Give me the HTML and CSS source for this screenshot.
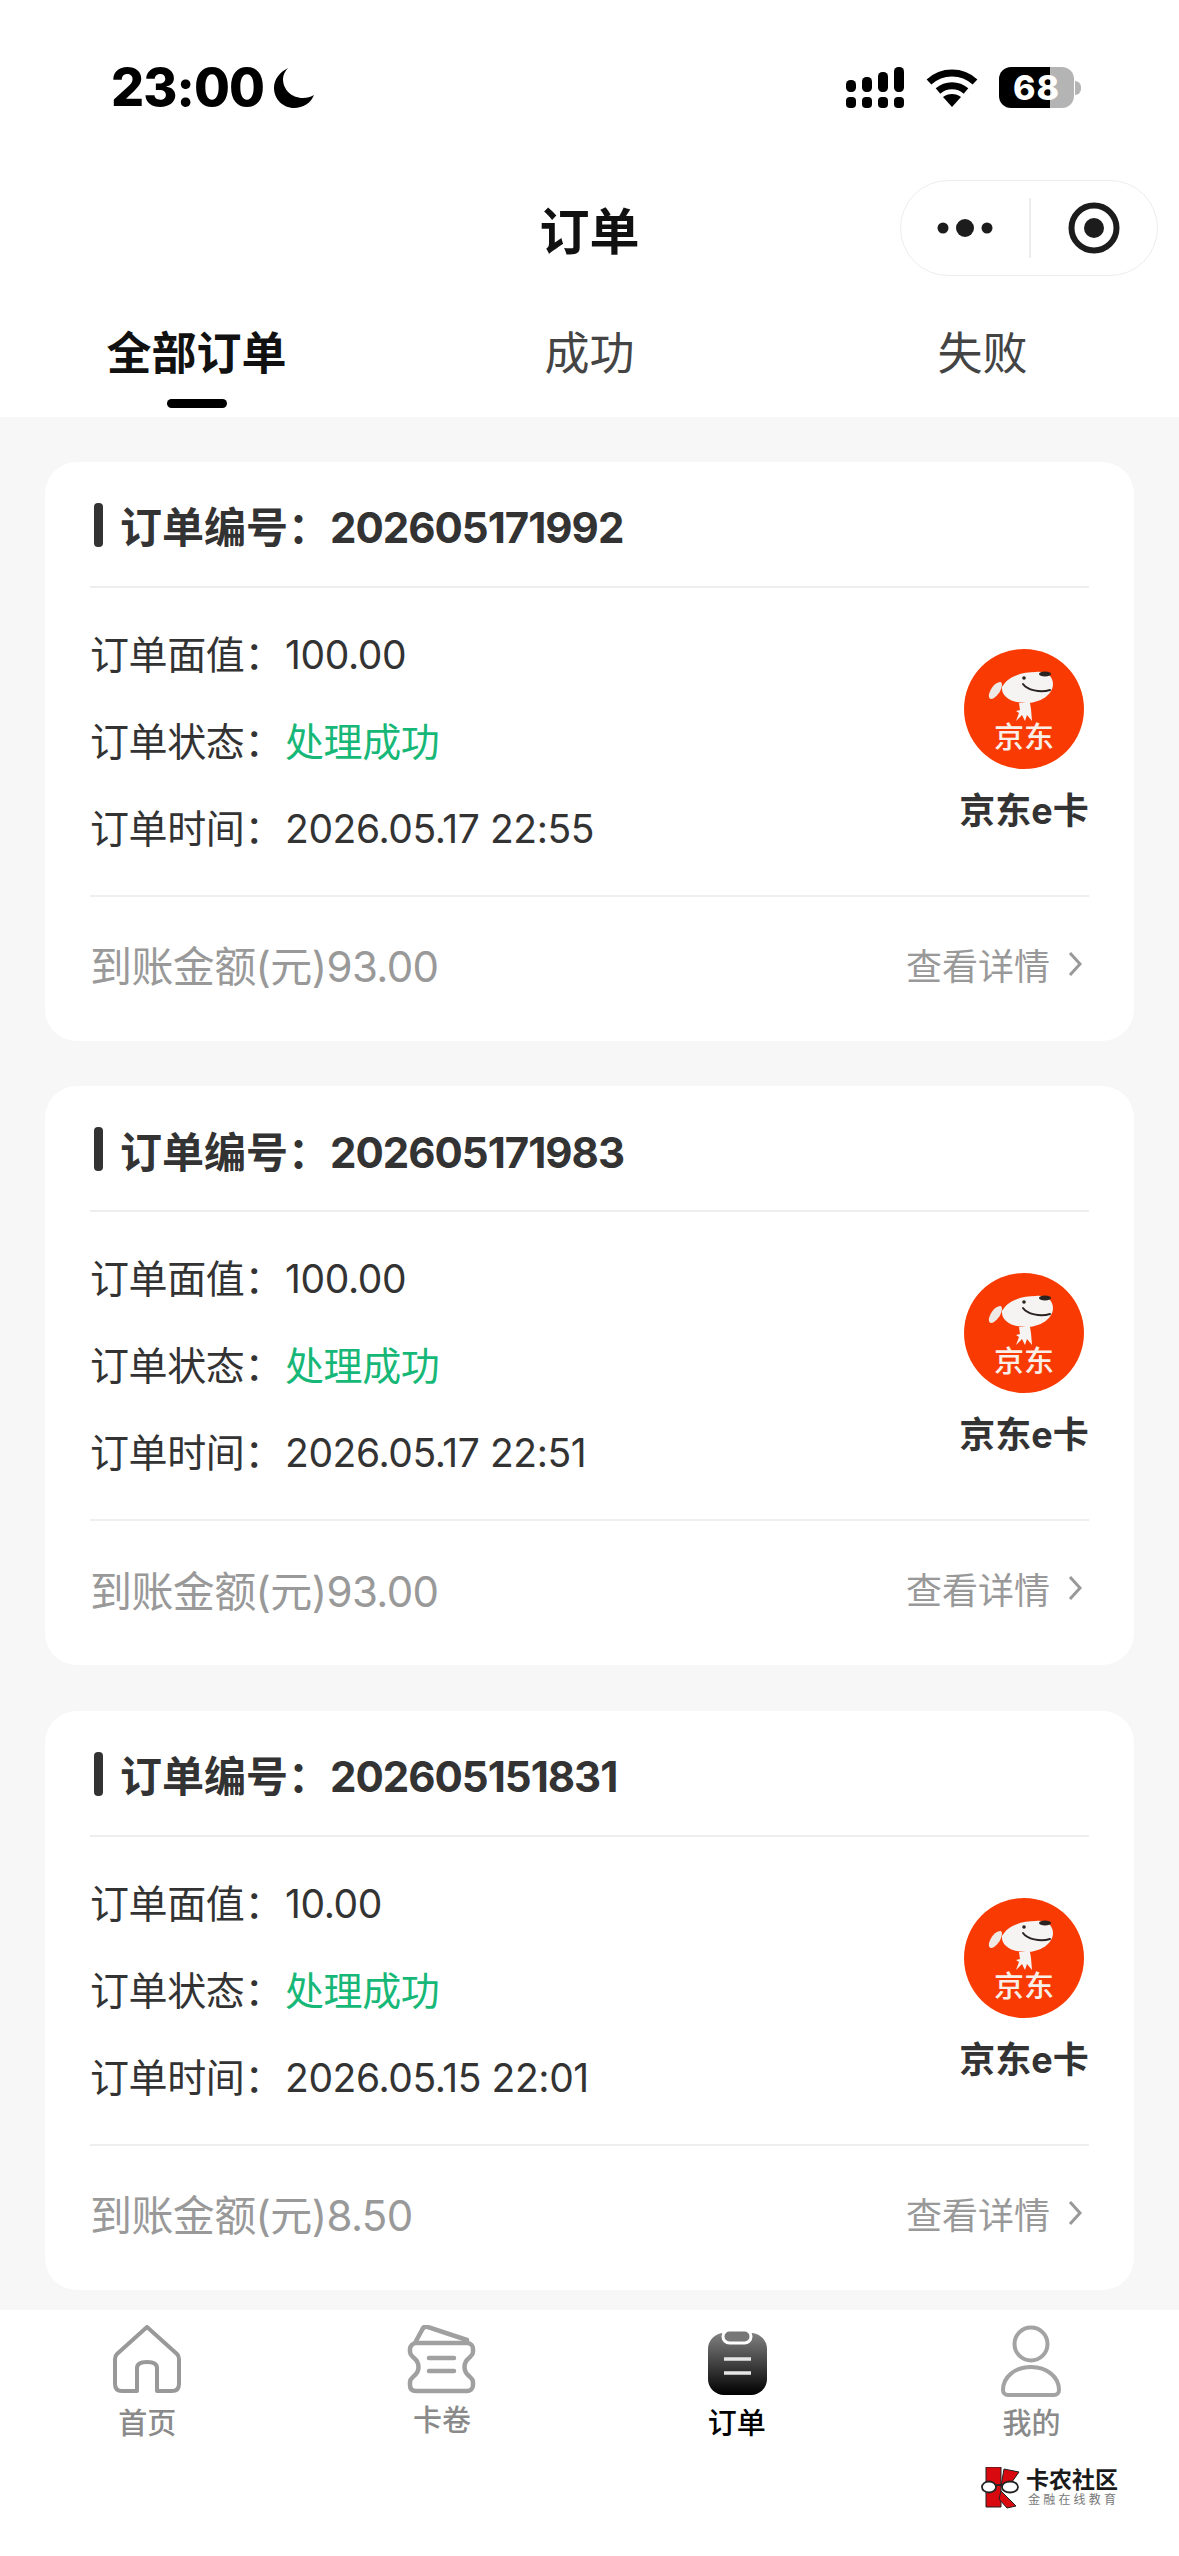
FILE: index.html
```html
<!DOCTYPE html>
<html lang="zh-CN">
<head>
  <meta charset="UTF-8">
  <meta name="viewport" content="width=device-width, initial-scale=1.0">
  <title>订单</title>
  <link rel="stylesheet" href="styles.css">
</head>
<body>
  <header class="top">
    <div class="status">
      <div class="clock">
        <span>23:00</span>
        <svg class="moon" viewBox="0 0 42 40"><path d="M15 0C7 4 1 11 1 20c0 11 9 20 20 20 9 0 17-5 20-13-3 2-7 3-11 3C18 30 10 21 10 11c0-4 2-8 5-11z" fill="#000"/></svg>
      </div>
      <div class="sys">
        <svg class="signal" viewBox="0 0 58 41" fill="#000">
          <rect x="0" y="13" width="10" height="12" rx="4.5"/>
          <rect x="16" y="10" width="10" height="15" rx="4.5"/>
          <rect x="32" y="5" width="10" height="20" rx="4.5"/>
          <rect x="48" y="0" width="10" height="25" rx="4.5"/>
          <rect x="0" y="30" width="10" height="11" rx="4"/>
          <rect x="16" y="30" width="10" height="11" rx="4"/>
          <rect x="32" y="30" width="10" height="11" rx="4"/>
          <rect x="48" y="30" width="10" height="11" rx="4"/>
        </svg>
        <svg class="wifi" viewBox="0 0 52 38">
          <path d="M3 13C16 1 36 1 49 13M12 22c8-7 20-7 28 0" fill="none" stroke="#000" stroke-width="7"/>
          <path d="M17 28c5-4 13-4 18 0l-9 10z" fill="#000"/>
        </svg>
        <div class="battery"><span class="battery-num">68</span></div>
        <span class="battery-nub"></span>
      </div>
    </div>

    <div class="navbar">
      <h1 class="page-title">订单</h1>
      <div class="capsule">
        <svg class="cap-dots" viewBox="0 0 56 24" fill="#1c1c1c">
          <circle cx="6" cy="12" r="5.5"/><circle cx="28" cy="12" r="9"/><circle cx="50" cy="12" r="5.5"/>
        </svg>
        <span class="cap-line"></span>
        <svg class="cap-target" viewBox="0 0 52 52">
          <circle cx="26" cy="26" r="22.5" fill="none" stroke="#1c1c1c" stroke-width="6"/>
          <circle cx="26" cy="26" r="10" fill="#1c1c1c"/>
        </svg>
      </div>
    </div>

    <nav class="tabs">
      <a class="tab tab-active">全部订单</a>
      <a class="tab">成功</a>
      <a class="tab">失败</a>
    </nav>
  </header>

  <main class="list">
    <section class="card">
      <div class="card-head"><span class="head-bar"></span><h2 class="order-no">订单编号：<span class="order-num">202605171992</span></h2></div>
      <div class="card-body">
        <div class="rows">
          <p class="row"><span class="row-key">订单面值：</span>100.00</p>
          <p class="row"><span class="row-key">订单状态：</span><span class="ok">处理成功</span></p>
          <p class="row"><span class="row-key">订单时间：</span>2026.05.17 22:55</p>
        </div>
        <div class="brand">
          <svg class="brand-logo" viewBox="0 0 120 120">
            <circle cx="60" cy="60" r="60" fill="#f93b03"/>
            <path d="M38 38C44 27 58 23 72 23 82 22 89 27 89 35 89 46 76 54 62 54 48 54 37 48 38 38z" fill="#f6f4f2"/>
            <path d="M37 33C31 33 27 39 25 45 24 50 27 51 30 49 34 46 38 41 38 35z" fill="#eee9e5"/>
            <ellipse cx="81" cy="25" rx="6" ry="2.6" fill="#2b2322"/>
            <circle cx="60" cy="29" r="1.8" fill="#2b2322"/>
            <path d="M59 35c4 6 17 9 27 6" fill="none" stroke="#2b2322" stroke-width="2" stroke-linecap="round"/>
            <path d="M55 54h11l1 6 1 12-5-6-2 6-3-6-6 6 3-8-3-2 4-1z" fill="#f6f4f2"/>
            <text x="60" y="99" class="jd-mark" textLength="60" lengthAdjust="spacingAndGlyphs">京东</text>
          </svg>
          <span class="brand-name">京东e卡</span>
        </div>
      </div>
      <div class="card-foot">
        <span class="amount">到账金额(元)93.00</span>
        <a class="detail">查看详情<svg class="chev" viewBox="0 0 14 26"><path d="M2 2l10 11L2 24" fill="none" stroke="#999" stroke-width="3"/></svg></a>
      </div>
    </section>

    <section class="card">
      <div class="card-head"><span class="head-bar"></span><h2 class="order-no">订单编号：<span class="order-num">202605171983</span></h2></div>
      <div class="card-body">
        <div class="rows">
          <p class="row"><span class="row-key">订单面值：</span>100.00</p>
          <p class="row"><span class="row-key">订单状态：</span><span class="ok">处理成功</span></p>
          <p class="row"><span class="row-key">订单时间：</span>2026.05.17 22:51</p>
        </div>
        <div class="brand">
          <svg class="brand-logo" viewBox="0 0 120 120">
            <circle cx="60" cy="60" r="60" fill="#f93b03"/>
            <path d="M38 38C44 27 58 23 72 23 82 22 89 27 89 35 89 46 76 54 62 54 48 54 37 48 38 38z" fill="#f6f4f2"/>
            <path d="M37 33C31 33 27 39 25 45 24 50 27 51 30 49 34 46 38 41 38 35z" fill="#eee9e5"/>
            <ellipse cx="81" cy="25" rx="6" ry="2.6" fill="#2b2322"/>
            <circle cx="60" cy="29" r="1.8" fill="#2b2322"/>
            <path d="M59 35c4 6 17 9 27 6" fill="none" stroke="#2b2322" stroke-width="2" stroke-linecap="round"/>
            <path d="M55 54h11l1 6 1 12-5-6-2 6-3-6-6 6 3-8-3-2 4-1z" fill="#f6f4f2"/>
            <text x="60" y="99" class="jd-mark" textLength="60" lengthAdjust="spacingAndGlyphs">京东</text>
          </svg>
          <span class="brand-name">京东e卡</span>
        </div>
      </div>
      <div class="card-foot">
        <span class="amount">到账金额(元)93.00</span>
        <a class="detail">查看详情<svg class="chev" viewBox="0 0 14 26"><path d="M2 2l10 11L2 24" fill="none" stroke="#999" stroke-width="3"/></svg></a>
      </div>
    </section>

    <section class="card">
      <div class="card-head"><span class="head-bar"></span><h2 class="order-no">订单编号：<span class="order-num">202605151831</span></h2></div>
      <div class="card-body">
        <div class="rows">
          <p class="row"><span class="row-key">订单面值：</span>10.00</p>
          <p class="row"><span class="row-key">订单状态：</span><span class="ok">处理成功</span></p>
          <p class="row"><span class="row-key">订单时间：</span>2026.05.15 22:01</p>
        </div>
        <div class="brand">
          <svg class="brand-logo" viewBox="0 0 120 120">
            <circle cx="60" cy="60" r="60" fill="#f93b03"/>
            <path d="M38 38C44 27 58 23 72 23 82 22 89 27 89 35 89 46 76 54 62 54 48 54 37 48 38 38z" fill="#f6f4f2"/>
            <path d="M37 33C31 33 27 39 25 45 24 50 27 51 30 49 34 46 38 41 38 35z" fill="#eee9e5"/>
            <ellipse cx="81" cy="25" rx="6" ry="2.6" fill="#2b2322"/>
            <circle cx="60" cy="29" r="1.8" fill="#2b2322"/>
            <path d="M59 35c4 6 17 9 27 6" fill="none" stroke="#2b2322" stroke-width="2" stroke-linecap="round"/>
            <path d="M55 54h11l1 6 1 12-5-6-2 6-3-6-6 6 3-8-3-2 4-1z" fill="#f6f4f2"/>
            <text x="60" y="99" class="jd-mark" textLength="60" lengthAdjust="spacingAndGlyphs">京东</text>
          </svg>
          <span class="brand-name">京东e卡</span>
        </div>
      </div>
      <div class="card-foot">
        <span class="amount">到账金额(元)8.50</span>
        <a class="detail">查看详情<svg class="chev" viewBox="0 0 14 26"><path d="M2 2l10 11L2 24" fill="none" stroke="#999" stroke-width="3"/></svg></a>
      </div>
    </section>
  </main>

  <footer class="tabbar">
    <div class="bar-items">
      <a class="bar-item">
        <svg class="bar-icon" viewBox="-1 0 70 72"><path d="M34 2L4 29c-1.500 1.500-2 3-2 5V59c0 4 2 7 7 7H24V43c0-4 4-6 10-6s10 2 10 6V66H59c5 0 7-3 7-7V34c0-2-.5-3.500-2-5z" fill="none" stroke="#999" stroke-width="4" stroke-linejoin="round"/></svg>
        <span>首页</span>
      </a>
      <a class="bar-item bar-item-up">
        <svg class="bar-icon" viewBox="0 0 70 72" fill="none" stroke="#a0a0a0" stroke-width="4.500" stroke-linecap="round" stroke-linejoin="round">
          <path d="M9 16l6-11c1-3 3-4 6-3L60 15" />
          <path d="M9 18H60c4 0 6 3 6 6v3c0 3-2 4-4 6-6 5-6 13 0 18 2 2 4 3 4 6v3c0 4-3 6-6 6H9c-4 0-6-2-6-6v-3c0-3 2-4 4-6 6-5 6-13 0-18-2-2-4-3-4-6v-3c0-3 3-6 6-6z"/>
          <path d="M22 33H47M22 46H47"/>
        </svg>
        <span>卡卷</span>
      </a>
      <a class="bar-item bar-on">
        <svg class="bar-icon" viewBox="0 0 70 72">
          <defs><linearGradient id="clip-fill" x1="0" y1="0" x2="0" y2="1"><stop offset="0" stop-color="#808080"/><stop offset="1" stop-color="#000"/></linearGradient></defs>
          <rect x="6" y="8" width="59" height="62" rx="16" fill="url(#clip-fill)"/>
          <rect x="21" y="5" width="28" height="13" rx="6.500" fill="#777" stroke="#fff" stroke-width="3"/>
          <path d="M22 34H49M22 48H49" stroke="#e6e6e6" stroke-width="3.400"/>
        </svg>
        <span>订单</span>
      </a>
      <a class="bar-item">
        <svg class="bar-icon" viewBox="0 0 70 72" fill="none" stroke="#a3a3a3" stroke-width="4">
          <circle cx="34" cy="19" r="16.500"/>
          <path d="M34 42c-16 0-28 10-28 23 0 3 2 5 5 5H57c3 0 5-2 5-5 0-13-12-23-28-23z"/>
        </svg>
        <span>我的</span>
      </a>
    </div>
    <div class="mark">
      <svg class="mark-logo" viewBox="0 0 40 42">
        <path d="M5 0H20V40H5z" fill="#d8090f" stroke="#222" stroke-width="1"/>
        <path d="M23 2L38 5 28 19H20z" fill="#d8090f" stroke="#222" stroke-width="1"/>
        <path d="M20 24L35 39 26 41 18 32z" fill="#d8090f" stroke="#222" stroke-width="1"/>
        <ellipse cx="8" cy="20" rx="7" ry="5.500" fill="#fff" stroke="#222" stroke-width="1.800"/>
        <ellipse cx="29" cy="20" rx="8" ry="5.500" fill="#fff" stroke="#222" stroke-width="1.800"/>
        <path d="M15 18h6" stroke="#222" stroke-width="1.800"/>
      </svg>
      <div class="mark-text">
        <strong>卡农社区</strong>
        <small>金融在线教育</small>
      </div>
    </div>
  </footer>
</body>
</html>
```

FILE: styles.css
```css
* {
  box-sizing: border-box;
}

html, body {
  margin: 0;
  padding: 0;
}

body {
  width: 1179px;
  height: 2556px;
  overflow: hidden;
  display: flex;
  flex-direction: column;
  background-color: #f7f7f7;
  color: #333333;
  font-family: Inter, "Noto Sans CJK SC", sans-serif;
}

.jd-mark {
  font-family: "Noto Sans CJK SC", sans-serif;
  font-size: 29px;
  font-weight: 500;
  fill: #f8efe9;
  text-anchor: middle;
}

/* top area */
.top {
  height: 417px;
  background-color: #ffffff;
  flex: none;
}

.status {
  height: 180px;
  padding: 67px 98px 0 111px;
  display: flex;
  justify-content: space-between;
  align-items: flex-start;
}

.clock {
  display: flex;
  align-items: center;
  gap: 9px;
  height: 41px;
  color: #000000;
  font-size: 52px;
  font-weight: 800;
  letter-spacing: -0.9px;
}

.moon {
  width: 42px;
  height: 40px;
}

.sys {
  display: flex;
  align-items: center;
  height: 41px;
}

.signal {
  width: 58px;
  height: 41px;
}

.wifi {
  width: 52px;
  height: 38px;
  margin-left: 22px;
}

.battery {
  width: 75px;
  height: 41px;
  margin-left: 21px;
  border-radius: 12px;
  display: flex;
  align-items: center;
  justify-content: center;
  background: linear-gradient(90deg, #000000 68%, #b4b4b4 68%);
}

.battery-num {
  color: #ffffff;
  font-size: 34px;
  font-weight: 800;
  letter-spacing: 1px;
}

.battery-nub {
  width: 6px;
  height: 14px;
  margin-left: 1px;
  border-radius: 0 7px 7px 0;
  background-color: #b4b4b4;
}

.navbar {
  height: 96px;
  padding-right: 21px;
  display: flex;
  justify-content: flex-end;
  align-items: center;
  position: relative;
}

.page-title {
  position: absolute;
  left: 0;
  right: 0;
  margin: 0;
  text-align: center;
  color: #111111;
  font-size: 50px;
  font-weight: 700;
}

.capsule {
  width: 258px;
  height: 96px;
  border: 1.5px solid #ededed;
  border-radius: 48px;
  display: flex;
  align-items: center;
}

.cap-dots {
  width: 56px;
  height: 24px;
  margin-left: 36px;
}

.cap-line {
  width: 1.5px;
  height: 60px;
  margin-left: 36px;
  background-color: #ececec;
}

.cap-target {
  width: 52px;
  height: 52px;
  margin-left: 37px;
}

.tabs {
  display: grid;
  grid-template-columns: repeat(3, 393px);
  height: 141px;
}

.tab {
  height: 100%;
  padding-top: 43px;
  text-align: center;
  color: #444444;
  font-size: 45px;
  line-height: 70px;
  position: relative;
}

.tab-active {
  color: #111111;
  font-weight: 700;
}

.tab-active::after {
  content: "";
  position: absolute;
  left: 167px;
  bottom: 9px;
  width: 60px;
  height: 9px;
  border-radius: 5px;
  background-color: #000000;
}

/* order cards */
.list {
  flex: 1;
  padding: 44.5px 45px 0;
  display: flex;
  flex-direction: column;
  gap: 45.5px;
}

.card {
  height: 579px;
  flex: none;
  padding: 0 45px;
  border-radius: 32px;
  background-color: #ffffff;
}

.card-head {
  height: 126px;
  padding-top: 2px;
  border-bottom: 2px solid #eeeeee;
  display: flex;
  align-items: center;
  gap: 17px;
}

.head-bar {
  width: 9px;
  height: 44px;
  margin-left: 4px;
  border-radius: 4px;
  background-color: #333333;
}

.order-no {
  margin: 0;
  font-size: 42px;
  font-weight: 700;
  color: #333333;
}

.order-num {
  letter-spacing: -1px;
}

.card-body {
  height: 309px;
  border-bottom: 2px solid #eeeeee;
  display: flex;
  justify-content: space-between;
}

.rows {
  padding-top: 23px;
}

.row {
  margin: 0;
  height: 87px;
  font-size: 39px;
  line-height: 87px;
  letter-spacing: -0.4px;
  color: #333333;
}

.row-key {
  display: inline-block;
  width: 195px;
}

.ok {
  color: #17b877;
}

.brand {
  width: 130px;
  padding-top: 61px;
  display: flex;
  flex-direction: column;
  align-items: center;
}

.brand-logo {
  width: 120px;
  height: 120px;
}

.brand-name {
  margin-top: 13px;
  font-size: 36px;
  font-weight: 700;
  white-space: nowrap;
}

.card-foot {
  height: 142px;
  padding-bottom: 8px;
  display: flex;
  justify-content: space-between;
  align-items: center;
}

.amount {
  font-size: 42px;
  letter-spacing: -0.6px;
  color: #999999;
}

.detail {
  display: flex;
  align-items: center;
  gap: 18px;
  margin-right: 7px;
  font-size: 36px;
  color: #999999;
}

.chev {
  width: 14px;
  height: 26px;
}

/* bottom bar */
.tabbar {
  height: 246px;
  flex: none;
  background-color: #ffffff;
  position: relative;
}

.bar-items {
  display: grid;
  grid-template-columns: repeat(4, 1fr);
  padding-top: 15px;
}

.bar-item {
  display: flex;
  flex-direction: column;
  align-items: center;
  gap: 12px;
  color: #8a8a8a;
  font-size: 29px;
  line-height: 30px;
  font-weight: 500;
}

.bar-item-up {
  gap: 9px;
}

.bar-icon {
  flex: none;
  height: 72px;
  width: 70px;
}

.bar-on {
  color: #000000;
}

.mark {
  position: absolute;
  left: 981px;
  top: 157px;
  display: flex;
  gap: 5px;
}

.mark-logo {
  width: 40px;
  height: 42px;
}

.mark-text {
  display: flex;
  flex-direction: column;
  color: #1a1a1a;
}

.mark-text strong {
  font-size: 23px;
  line-height: 26px;
  white-space: nowrap;
}

.mark-text small {
  margin-left: 2px;
  font-size: 12px;
  line-height: 14px;
  letter-spacing: 3.2px;
  color: #777777;
  white-space: nowrap;
}
```
